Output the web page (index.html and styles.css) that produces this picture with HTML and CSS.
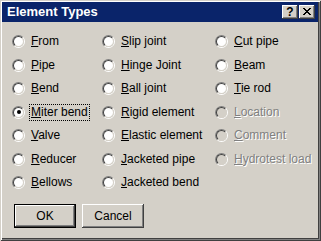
FILE: index.html
```html
<!DOCTYPE html>
<html>
<head>
<meta charset="utf-8">
<link rel="stylesheet" href="styles.css">
</head>
<body>
<div class="window">
  <div class="titlebar">
    <span class="title">Element Types</span>
    <div class="tbtns">
      <span class="tbtn help">?</span>
      <span class="tbtn close"><svg width="8" height="7" viewBox="0 0 8 7"><path d="M0 0h2v1h1v1h2v-1h1v-1h2v1h-1v1h-1v1h-1v1h1v1h1v1h1v1h-2v-1h-1v-1h-2v1h-1v1h-2v-1h1v-1h1v-1h1v-1h-1v-1h-1v-1h-1z" fill="#000"/></svg></span>
    </div>
  </div>
  <div class="body">
    <div class="grid">
      <label class="opt"><span class="radio"><span class="in"></span></span><span class="lbl"><u>F</u>rom</span></label>
      <label class="opt"><span class="radio"><span class="in"></span></span><span class="lbl"><u>P</u>ipe</span></label>
      <label class="opt"><span class="radio"><span class="in"></span></span><span class="lbl"><u>B</u>end</span></label>
      <label class="opt"><span class="radio"><span class="in"><span class="dot"></span></span></span><span class="lbl focus"><u>M</u>iter bend</span></label>
      <label class="opt"><span class="radio"><span class="in"></span></span><span class="lbl"><u>V</u>alve</span></label>
      <label class="opt"><span class="radio"><span class="in"></span></span><span class="lbl"><u>R</u>educer</span></label>
      <label class="opt"><span class="radio"><span class="in"></span></span><span class="lbl"><u>B</u>ellows</span></label>

      <label class="opt"><span class="radio"><span class="in"></span></span><span class="lbl"><u>S</u>lip joint</span></label>
      <label class="opt"><span class="radio"><span class="in"></span></span><span class="lbl"><u>H</u>inge Joint</span></label>
      <label class="opt"><span class="radio"><span class="in"></span></span><span class="lbl"><u>B</u>all joint</span></label>
      <label class="opt"><span class="radio"><span class="in"></span></span><span class="lbl"><u>R</u>igid element</span></label>
      <label class="opt"><span class="radio"><span class="in"></span></span><span class="lbl"><u>E</u>lastic element</span></label>
      <label class="opt"><span class="radio"><span class="in"></span></span><span class="lbl"><u>J</u>acketed pipe</span></label>
      <label class="opt"><span class="radio"><span class="in"></span></span><span class="lbl"><u>J</u>acketed bend</span></label>

      <label class="opt"><span class="radio"><span class="in"></span></span><span class="lbl"><u>C</u>ut pipe</span></label>
      <label class="opt"><span class="radio"><span class="in"></span></span><span class="lbl"><u>B</u>eam</span></label>
      <label class="opt"><span class="radio"><span class="in"></span></span><span class="lbl"><u>T</u>ie rod</span></label>
      <label class="opt disabled"><span class="radio"><span class="in"></span></span><span class="lbl"><u>L</u>ocation</span></label>
      <label class="opt disabled"><span class="radio"><span class="in"></span></span><span class="lbl"><u>C</u>omment</span></label>
      <label class="opt disabled"><span class="radio"><span class="in"></span></span><span class="lbl"><u>H</u>ydrotest load</span></label>
    </div>
    <div class="buttons">
      <span class="btn default"><span class="face">OK</span></span>
      <span class="btn"><span class="face">Cancel</span></span>
    </div>
  </div>
</div>
</body>
</html>
```
FILE: styles.css
```css
html, body {
  margin: 0;
  padding: 0;
  background: #d4d0c8;
}
body {
  width: 321px;
  height: 241px;
  overflow: hidden;
  font-family: "Liberation Sans", Arial, sans-serif;
  font-size: 12px;
  color: #000;
}
.window {
  box-sizing: border-box;
  width: 321px;
  height: 241px;
  padding: 2px 3px 3px 2px;
  background: #d4d0c8;
  box-shadow: inset 1px 1px #d4d0c8, inset -1px -1px #404040, inset 2px 2px #fff, inset -2px -2px #808080, inset -3px -3px #404040;
  display: flex;
  flex-direction: column;
}
.titlebar {
  height: 20px;
  background: #0a246a;
  display: flex;
  align-items: center;
  justify-content: space-between;
  padding: 0 3px 0 5px;
}
.title {
  color: #fff;
  font-weight: bold;
  font-size: 13px;
  line-height: 20px;
}
.tbtns {
  display: flex;
  gap: 1px;
}
.tbtn {
  box-sizing: border-box;
  width: 16px;
  height: 14px;
  background: #d4d0c8;
  box-shadow: inset -1px -1px #404040, inset 1px 1px #fff, inset -2px -2px #808080, inset 2px 2px #d4d0c8;
  display: flex;
  align-items: center;
  justify-content: center;
}
.help {
  font-weight: bold;
  font-size: 12px;
  line-height: 14px;
  padding-bottom: 1px;
}
.close svg {
  display: block;
  margin-top: -1px;
}
.body {
  flex: 1;
  padding: 8px 0 0 10px;
}
.grid {
  display: grid;
  grid-auto-flow: column;
  grid-template-rows: repeat(7, 23.5px);
  grid-template-columns: 90px 113px 1fr;
}
.opt {
  display: flex;
  align-items: center;
}
.radio {
  box-sizing: border-box;
  width: 13px;
  height: 13px;
  border-radius: 50%;
  border: 1px solid;
  border-color: #808080 #fff #fff #808080;
  margin-right: 4px;
  flex: none;
}
.radio .in {
  box-sizing: border-box;
  display: flex;
  align-items: center;
  justify-content: center;
  width: 11px;
  height: 11px;
  border-radius: 50%;
  border: 1px solid;
  border-color: #404040 #d4d0c8 #d4d0c8 #404040;
  background: #fff;
}
.dot {
  width: 4px;
  height: 4px;
  border-radius: 50%;
  background: #000;
}
.lbl {
  border: 1px solid transparent;
  padding: 0 1px;
  line-height: 15px;
  white-space: nowrap;
}
.lbl.focus {
  border: 1px dotted #000;
}
.disabled .lbl {
  color: #808080;
  text-shadow: 1px 1px 0 #fff;
}
.disabled .radio .in {
  background: #d4d0c8;
}
.buttons {
  display: flex;
  gap: 6px;
  margin-top: 9px;
  padding-left: 2px;
}
.btn {
  box-sizing: border-box;
  width: 62px;
  height: 24px;
  background: #d4d0c8;
  box-shadow: inset -1px -1px #404040, inset 1px 1px #fff, inset -2px -2px #808080, inset 2px 2px #d4d0c8;
  display: flex;
}
.btn .face {
  flex: 1;
  display: flex;
  align-items: center;
  justify-content: center;
}
.btn.default {
  border: 1px solid #000;
}
```
